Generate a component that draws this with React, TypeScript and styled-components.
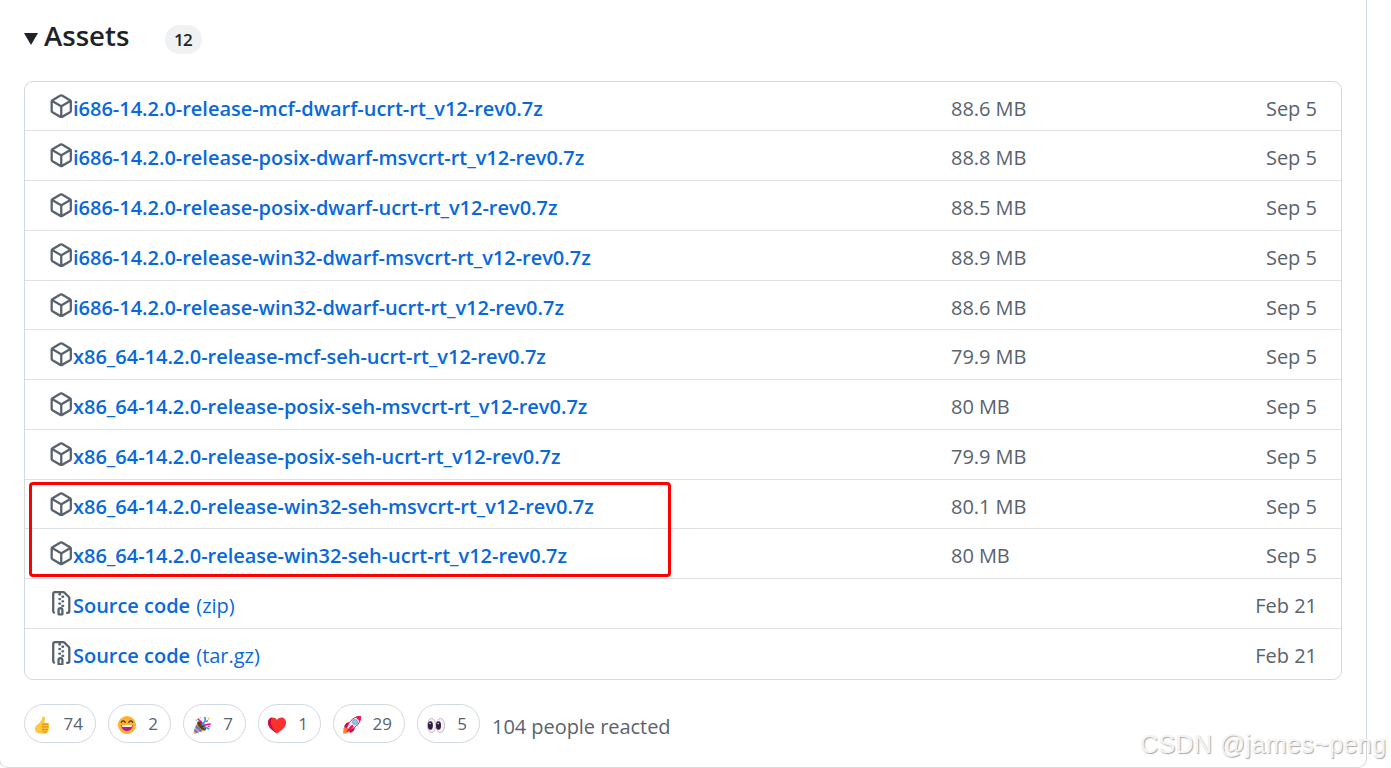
import type { ReactNode } from 'react';
import styled, { createGlobalStyle } from 'styled-components';

const assets = [
  { name: 'i686-14.2.0-release-mcf-dwarf-ucrt-rt_v12-rev0.7z', size: '88.6 MB', date: 'Sep 5' },
  { name: 'i686-14.2.0-release-posix-dwarf-msvcrt-rt_v12-rev0.7z', size: '88.8 MB', date: 'Sep 5' },
  { name: 'i686-14.2.0-release-posix-dwarf-ucrt-rt_v12-rev0.7z', size: '88.5 MB', date: 'Sep 5' },
  { name: 'i686-14.2.0-release-win32-dwarf-msvcrt-rt_v12-rev0.7z', size: '88.9 MB', date: 'Sep 5' },
  { name: 'i686-14.2.0-release-win32-dwarf-ucrt-rt_v12-rev0.7z', size: '88.6 MB', date: 'Sep 5' },
  { name: 'x86_64-14.2.0-release-mcf-seh-ucrt-rt_v12-rev0.7z', size: '79.9 MB', date: 'Sep 5' },
  { name: 'x86_64-14.2.0-release-posix-seh-msvcrt-rt_v12-rev0.7z', size: '80 MB', date: 'Sep 5' },
  { name: 'x86_64-14.2.0-release-posix-seh-ucrt-rt_v12-rev0.7z', size: '79.9 MB', date: 'Sep 5' },
  { name: 'x86_64-14.2.0-release-win32-seh-msvcrt-rt_v12-rev0.7z', size: '80.1 MB', date: 'Sep 5' },
  { name: 'x86_64-14.2.0-release-win32-seh-ucrt-rt_v12-rev0.7z', size: '80 MB', date: 'Sep 5' },
  { name: 'Source code', format: '(zip)', date: 'Feb 21' },
  { name: 'Source code', format: '(tar.gz)', date: 'Feb 21' },
];

const PackageIcon = () => (
  <svg viewBox="0 0 16 16">
    <path d="m8.878.392 5.25 3.045c.54.314.872.89.872 1.514v6.098a1.75 1.75 0 0 1-.872 1.514l-5.25 3.045a1.75 1.75 0 0 1-1.756 0l-5.25-3.045A1.75 1.75 0 0 1 1 11.049V4.951c0-.624.332-1.201.872-1.514L7.122.392a1.75 1.75 0 0 1 1.756 0ZM7.875 1.69l-4.63 2.685L8 7.133l4.755-2.758-4.63-2.685a.248.248 0 0 0-.25 0ZM2.5 5.677v5.372c0 .09.047.171.125.216l4.625 2.683V8.432Zm6.25 8.271 4.625-2.683a.25.25 0 0 0 .125-.216V5.677L8.75 8.432Z" />
  </svg>
);

const ZipIcon = () => (
  <svg viewBox="0 0 16 16">
    <path d="M3.5 1.75v11.5c0 .09.048.173.126.217a.75.75 0 0 1-.752 1.298A1.748 1.748 0 0 1 2 13.25V1.75C2 .784 2.784 0 3.75 0h5.586c.464 0 .909.185 1.237.513l2.914 2.914c.329.328.513.773.513 1.237v8.586A1.75 1.75 0 0 1 12.25 15h-.5a.75.75 0 0 1 0-1.5h.5a.25.25 0 0 0 .25-.25V4.664a.25.25 0 0 0-.073-.177L9.513 1.573a.25.25 0 0 0-.177-.073H7.25a.75.75 0 0 1 0 1.5h-.5a.75.75 0 0 1 0-1.5h-3a.25.25 0 0 0-.25.25Zm3.75 8.75h.5c.966 0 1.75.784 1.75 1.75v3a.75.75 0 0 1-.75.75h-2.5a.75.75 0 0 1-.75-.75v-3c0-.966.784-1.75 1.75-1.75ZM6 5.25a.75.75 0 0 1 .75-.75h.5a.75.75 0 0 1 0 1.5h-.5A.75.75 0 0 1 6 5.25Zm.75 2.25h.5a.75.75 0 0 1 0 1.5h-.5a.75.75 0 0 1 0-1.5ZM8 6.75A.75.75 0 0 1 8.75 6h.5a.75.75 0 0 1 0 1.5h-.5A.75.75 0 0 1 8 6.75ZM8.75 3h.5a.75.75 0 0 1 0 1.5h-.5a.75.75 0 0 1 0-1.5ZM8 9.75A.75.75 0 0 1 8.75 9h.5a.75.75 0 0 1 0 1.5h-.5A.75.75 0 0 1 8 9.75Zm-1 2.5v2.25h1v-2.25a.25.25 0 0 0-.25-.25h-.5a.25.25 0 0 0-.25.25Z" />
  </svg>
);

const ThumbsUp = () => (
  <svg viewBox="0 0 18 18">
    <path d="M8.2 1.2C8.3.2 10.8.1 11 2.3c.1 1.6-.6 3-.6 4.5h3.4c1.2 0 1.6 1.6.8 2.3.8.6.8 1.9 0 2.5.6.7.5 1.8-.3 2.3.5.9 0 2.1-1 2.3-.6 1.3-2.3 1.6-4.6 1.6-3.4 0-6.500-.7-7.400-2.700-.7-1.800-.4-4.100.7-5.400C3.300 8.300 8 6.200 8.200 1.200Z" fill="#ffc83d" />
    <path d="M8.600 8.200h5.800M8.900 10.900h5.700M8.900 13.400h5.300M9.200 15.900h3.700" stroke="#d67d00" strokeWidth=".9" fill="none" />
    <path d="M8.500 7.300v8.500" stroke="#e39d1a" strokeWidth=".8" />
  </svg>
);

const Smile = () => (
  <svg viewBox="0 0 18 18">
    <circle cx="9" cy="9" r="9" fill="#ffb02e" />
    <path d="M3.3 6.5c.6-2.2 3.2-2.2 3.9 0M10.800 6.500c.7-2.200 3.300-2.200 3.900 0" fill="none" stroke="#402a32" strokeWidth="1.1" strokeLinecap="round" />
    <path d="M3.300 9h11.400c0 3.700-2.500 6-5.700 6s-5.700-2.300-5.700-6Z" fill="#bb1d80" />
    <path d="M4 9h10v1c0 .5-.4.9-.9.9H4.900c-.5 0-.9-.4-.9-.9Z" fill="#fff" />
  </svg>
);

const Party = () => (
  <svg viewBox="0 0 18 18">
    <path d="M4.500 5.500 12.800 14 2.200 17.700C1 18 .1 17 .5 15.900Z" fill="#ffb02e" />
    <path d="m3.300 8.800 6.300 6.300-2.500.9L2.200 11.600ZM1.700 12.700l4 3.800-2.400.8L.9 14.900Z" fill="#5b78e8" />
    <ellipse cx="8.7" cy="9.8" rx="5.8" ry="2.7" transform="rotate(46 8.7 9.8)" fill="#5d3830" />
    <path d="M8 9.500C9.500 8.300 9.200 6.500 8 5.400 6.900 4.200 5.300 4 4.900 2.500" stroke="#e6188b" strokeWidth="1.5" fill="none" />
    <path d="M9.500 9.500c.2-3.200 3.800-3.400 2.800-6.500L11.600 1" stroke="#20a5e5" strokeWidth="1.8" fill="none" />
    <path d="M10.500 10c1.800-2.500 4-.5 7.200-2.200" stroke="#e6188b" strokeWidth="1.6" fill="none" />
    <path d="M10.500 11.800c2.300-1.500 3.500-.2 5.700 1.500" stroke="#20a5e5" strokeWidth="1.8" fill="none" />
    <circle cx="7.5" cy="1.5" r=".8" fill="#f9c23c" />
    <circle cx="15.6" cy="2.7" r="1" fill="#f9c23c" />
    <circle cx="3.2" cy="4.1" r=".7" fill="#20a5e5" />
    <path d="m13.300 5.800 1.400-1.500M14.800 10.500l1.700-.3" stroke="#f70a8d" strokeWidth="1.1" />
  </svg>
);

const Heart = () => (
  <svg viewBox="0 0 18 18">
    <path d="M9 17.400C4 14.300 0 11 0 6.400 0 1.300 6.300-.2 9 4c2.700-4.200 9-2.700 9 2.400 0 4.600-4 7.900-9 11Z" fill="#f8312f" />
    <path d="M9 17.400C4 14.300 0 11 0 6.400 0 3.600 1.800 2 4 1.500 1.300 5.500 3.600 12 9 17.400Z" fill="#ca0b4a" />
  </svg>
);

const Rocket = () => (
  <svg viewBox="0 0 18 18">
    <path d="M.5 12.200c1.200-1.600 3.700-1 4.600.3 1.300 1.200 1.500 2.800.1 3.900-1.300 1-3.300 1-5.100 1.200Z" fill="#ff822d" />
    <path d="M6.200 6.300C3.800 6 1.500 8.300 1.200 11.400l3.600.6ZM11.700 11.800c.2 2.400-2 4.900-5.100 5.200l-.6-3.600Z" fill="#ca0b4a" />
    <path d="M17.500.5C12.500-.1 6.600 3.800 3.500 12.100l2.400 2.400C14.200 11.400 18.100 5.500 17.500.5Z" fill="#ece8f0" stroke="#d51a59" strokeWidth="1" />
    <path d="M17.800.2c-1.900-.2-3.600.1-5.300.9l4.400 4.400c.8-1.700 1.100-3.500.9-5.300ZM9.300 8.700c-2.600 1.900-4.800 4.400-6 7.500 3.200-1.200 5.600-3.400 7.500-6Z" fill="#f1124f" />
    <circle cx="12" cy="6" r="2.5" fill="#83cbff" stroke="#7d8ca8" strokeWidth=".7" />
  </svg>
);

const Eyes = () => (
  <svg viewBox="0 0 18 18">
    <ellipse cx="4.6" cy="9.5" rx="4.2" ry="7.1" fill="#f4f1f5" stroke="#b6aeb9" strokeWidth=".8" />
    <ellipse cx="13.4" cy="9.5" rx="4.2" ry="7.1" fill="#f4f1f5" stroke="#b6aeb9" strokeWidth=".8" />
    <ellipse cx="3.4" cy="9.5" rx="2.5" ry="4.2" fill="#321b41" />
    <ellipse cx="11.5" cy="9.5" rx="2.5" ry="4.2" fill="#321b41" />
    <circle cx="3" cy="7.5" r=".7" fill="#fff" />
    <circle cx="11.2" cy="7.5" r=".7" fill="#fff" />
  </svg>
);

const reactions: { icon: ReactNode; count: number }[] = [
  { icon: <ThumbsUp />, count: 74 },
  { icon: <Smile />, count: 2 },
  { icon: <Party />, count: 7 },
  { icon: <Heart />, count: 1 },
  { icon: <Rocket />, count: 29 },
  { icon: <Eyes />, count: 5 },
];

export default function App() {
  return (
    <>
      <GlobalStyle />
      <ReleaseCard>
        <Summary>
          <Caret viewBox="0 0 14 12">
            <path d="M0 0h14L7 12Z" />
          </Caret>
          <Title>Assets</Title>
          <Counter>12</Counter>
        </Summary>

        <AssetList>
          {assets.map(({ name, format, size, date }) => (
            <AssetRow key={name + format}>
              <AssetIcon>{format ? <ZipIcon /> : <PackageIcon />}</AssetIcon>
              <AssetName>
                {name}
                {format && <Format> {format}</Format>}
              </AssetName>
              <Size>{size}</Size>
              <UploadDate>{date}</UploadDate>
            </AssetRow>
          ))}
        </AssetList>

        <Reactions>
          {reactions.map(({ icon, count }) => (
            <Reaction key={count} $wide={count > 9}>
              {icon}
              <span>{count}</span>
            </Reaction>
          ))}
          <ReactionTotal>104 people reacted</ReactionTotal>
        </Reactions>
      </ReleaseCard>
      <Highlight />
      <Watermark>CSDN @james~peng</Watermark>
    </>
  );
}

const GlobalStyle = createGlobalStyle`
  * {
    box-sizing: border-box;
  }

  body {
    margin: 0;
    height: 768px;
    overflow: hidden;
    background: #fff;
    color: #1f2328;
    font-family: 'Open Sans', 'Noto Sans', sans-serif;
    font-size: 20px;
  }
`;

const ReleaseCard = styled.section`
  width: 1368px;
  height: 768px;
  margin-left: -1px;
  padding: 0 24px;
  border: 1px solid #d1d9e0;
  border-top: 0;
  border-radius: 0 0 9px 9px;
`;

const Summary = styled.header`
  display: flex;
  height: 80.55px;
`;

const Caret = styled.svg`
  width: 14px;
  height: 12px;
  margin-top: 33px;
  fill: #1f2328;
`;

const Title = styled.h3`
  width: 121px;
  margin: 15px 0 0 6px;
  font-size: 27.6px;
  font-weight: 600;
  line-height: 40px;
`;

const Counter = styled.span`
  width: 37px;
  height: 29px;
  padding-right: 1px;
  margin-top: 25px;
  border-radius: 15px;
  background: #eff1f3;
  font-size: 17px;
  font-weight: 600;
  letter-spacing: -0.7px;
  line-height: 29px;
  text-align: center;
`;

const AssetList = styled.ul`
  width: 1318px;
  margin: 0;
  padding: 0;
  border: 1px solid #d1d9e0;
  border-radius: 9px;
  list-style: none;
`;

const AssetRow = styled.li`
  display: flex;
  height: 49.77px;
  padding: 12px 24px 0 23.5px;
  border-bottom: 1px solid #dde2e7;
  line-height: 30px;

  &:last-child {
    border-bottom: 0;
  }
`;

const AssetIcon = styled.span`
  flex: 0 0 24.5px;
  height: 24.5px;
  line-height: 0;

  svg {
    width: 24.5px;
    height: 24.5px;
    fill: #59636e;
  }
`;

const AssetName = styled.a`
  flex: 0 0 878px;
  color: #0969da;
  font-weight: 600;
  letter-spacing: -0.02px;
`;

const Format = styled.span`
  margin-left: 1px;
  font-weight: 400;
`;

const Size = styled.span`
  flex: 1;
  color: #59636e;
  letter-spacing: -0.05px;
`;

const UploadDate = styled.span`
  color: #59636e;
`;

const Reactions = styled.footer`
  display: flex;
  gap: 12px;
  margin-top: 24px;
`;

const Reaction = styled.button<{ $wide: boolean }>`
  display: flex;
  align-items: center;
  justify-content: space-between;
  width: ${(props) => (props.$wide ? 72 : 63)}px;
  height: 39px;
  padding: 0 12px 0 9px;
  border: 1px solid #d1d9e0;
  border-radius: 20px;
  background: #fff;
  color: #59636e;
  font-family: inherit;
  font-size: 17px;

  svg {
    width: 18px;
    height: 18px;
    margin-top: 3px;
  }

  span {
    margin-top: 1px;
  }
`;

const ReactionTotal = styled.span`
  color: #59636e;
  letter-spacing: -0.05px;
  line-height: 46px;
`;

// Marks the two win32-seh builds
const Highlight = styled.div`
  position: absolute;
  top: 482px;
  left: 29px;
  width: 642px;
  height: 95px;
  border: 3px solid #fe0000;
  border-radius: 4px;
`;

const Watermark = styled.div`
  position: absolute;
  top: 729px;
  left: 1140px;
  color: #f4f4f4;
  font-family: 'Liberation Sans', sans-serif;
  font-size: 25px;
  letter-spacing: 0.4px;
  line-height: 30px;
  text-shadow: 1px 1px 1px #aaa;
  white-space: nowrap;
`;
